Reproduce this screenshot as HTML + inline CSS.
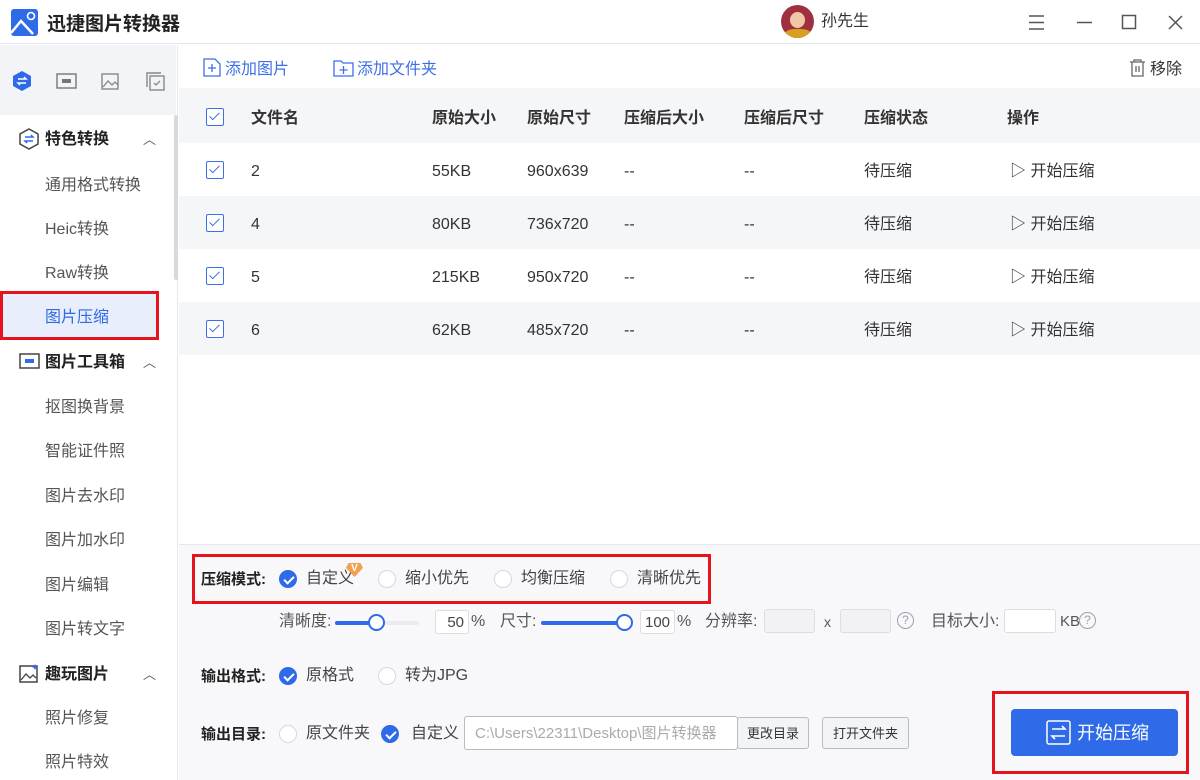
<!DOCTYPE html>
<html><head><meta charset="utf-8"><style>
*{margin:0;padding:0;box-sizing:border-box}
body{width:1200px;height:780px;overflow:hidden;background:#fff;font-family:"Liberation Sans","Noto Sans CJK SC",sans-serif;color:#333;position:relative;font-size:16px;line-height:24px}
.a{position:absolute;white-space:nowrap;line-height:24px}
.cb{position:absolute;width:18px;height:18px;border:1.5px solid #3d6fe8;border-radius:2px;background:#fff}
.cb:after{content:"";position:absolute;left:5px;top:1px;width:4px;height:9px;border:solid #3d6fe8;border-width:0 1.5px 1.5px 0;transform:rotate(45deg)}
.rad{position:absolute;width:18px;height:18px;border-radius:50%;border:1px solid #d6d8de;background:#fff}
.rad.on{background:#2f6ae8;border-color:#2f6ae8}
.rad.on:after{content:"";position:absolute;left:5.5px;top:2.5px;width:4px;height:8px;border:solid #fff;border-width:0 2px 2px 0;transform:rotate(45deg)}
.side{color:#555;font-size:16px}
.b{font-weight:bold;color:#222}
.inp{position:absolute;height:24px;border:1px solid #dcdde2;border-radius:3px;background:#fff;font-size:15px;color:#444;text-align:right;padding:0 4px;line-height:23px}
.btn{position:absolute;height:32px;border:1px solid #b8bac4;border-radius:3px;background:#f3f4f7;font-size:13px;color:#333;text-align:center;line-height:31px}
.help{position:absolute;width:17px;height:17px;border:1.3px solid #9aa0ae;border-radius:50%;font-size:12px;line-height:14px;text-align:center;color:#9aa0ae}
</style></head><body>
<div class="a" style="left:0;top:0;width:1200px;height:44px;border-bottom:1px solid #e3e6f2"></div>
<svg class="a" style="left:11px;top:9px" width="27" height="27" viewBox="0 0 27 27"><rect width="27" height="27" rx="3" fill="#2f6ae8"/><path d="M0 24 L10 12 L22 25" stroke="#fff" stroke-width="2.5" fill="none"/><circle cx="20" cy="7" r="3.5" stroke="#fff" stroke-width="1.6" fill="none"/></svg>
<div class="a b" style="left:47px;top:11px;font-size:19px;line-height:28px">迅捷图片转换器</div>
<div class="a" style="left:781px;top:5px;width:33px;height:33px;border-radius:50%;background:#a03040;overflow:hidden"><div style="position:absolute;left:9px;top:7px;width:15px;height:16px;border-radius:50%;background:#f0c8a8"></div><div style="position:absolute;left:4px;top:24px;width:26px;height:12px;background:#d8a020;border-radius:40%"></div></div>
<div class="a" style="left:821px;top:10px;font-size:16px;color:#333">孙先生</div>
<svg class="a" style="left:1027px;top:14px" width="20" height="17"><path d="M2 2h15M2 8.5h15M2 15h15" stroke="#555" stroke-width="1.5"/></svg>
<svg class="a" style="left:1075px;top:14px" width="20" height="17"><path d="M2 8.5h15" stroke="#555" stroke-width="1.5"/></svg>
<svg class="a" style="left:1121px;top:14px" width="17" height="17"><rect x="1.5" y="1.5" width="13" height="13" stroke="#555" stroke-width="1.5" fill="none"/></svg>
<svg class="a" style="left:1167px;top:14px" width="17" height="17"><path d="M2 2l13 13M15 2L2 15" stroke="#555" stroke-width="1.5"/></svg>
<div class="a" style="left:0;top:45px;width:178px;height:735px;background:#fff;border-right:1px solid #e8e9ee"></div>
<div class="a" style="left:0;top:45px;width:176px;height:70px;background:#f3f4f7"></div>
<div class="a" style="left:174px;top:115px;width:4px;height:165px;background:#d8d9de;border-radius:2px"></div>
<svg class="a" style="left:12px;top:70px" width="20" height="22"><path d="M10 1l9 5v10l-9 5l-9-5V6z" fill="#2f6ae8"/><path d="M6 9h8l-2-2M14 13H6l2 2" stroke="#fff" stroke-width="1.5" fill="none"/></svg>
<svg class="a" style="left:56px;top:72px" width="21" height="18"><rect x="1" y="2" width="19" height="14" stroke="#777" stroke-width="1.4" fill="none"/><rect x="6" y="7" width="9" height="4" fill="#777"/></svg>
<svg class="a" style="left:101px;top:71px" width="20" height="20"><rect x="1" y="3" width="16" height="15" stroke="#888" stroke-width="1.4" fill="none"/><path d="M2 16l5-6l4 4l3-3l3 3" stroke="#888" stroke-width="1.3" fill="none"/></svg>
<svg class="a" style="left:145px;top:71px" width="21" height="21"><rect x="5" y="5" width="14" height="14" stroke="#888" stroke-width="1.4" fill="none"/><path d="M2 16V2h14" stroke="#888" stroke-width="1.4" fill="none"/><path d="M9 12l2 2l4-4" stroke="#888" stroke-width="1.3" fill="none"/></svg>
<svg class="a" style="left:19px;top:128px" width="20" height="22"><path d="M10 1l9 5v10l-9 5l-9-5V6z" stroke="#444" stroke-width="1.5" fill="none"/><path d="M6 9h8l-2-2M14 13H6l2 2" stroke="#2f6ae8" stroke-width="1.5" fill="none"/></svg>
<div class="a b" style="left:45px;top:128px">特色转换</div>
<div class="a" style="left:143px;top:128px;font-size:13px;color:#555">︿</div>
<div class="a side" style="left:45px;top:174px">通用格式转换</div>
<div class="a side" style="left:45px;top:218px">Heic转换</div>
<div class="a side" style="left:45px;top:262px">Raw转换</div>
<div class="a" style="left:0;top:291px;width:159px;height:49px;background:#e8eefb;border:3px solid #e8121d"></div>
<div class="a" style="left:45px;top:306px;color:#2f6ae8">图片压缩</div>
<svg class="a" style="left:19px;top:352px" width="21" height="18"><rect x="1" y="2" width="19" height="14" stroke="#444" stroke-width="1.5" fill="none"/><rect x="6" y="7" width="9" height="4" fill="#2f6ae8"/></svg>
<div class="a b" style="left:45px;top:351px">图片工具箱</div>
<div class="a" style="left:143px;top:351px;font-size:13px;color:#555">︿</div>
<div class="a side" style="left:45px;top:396px">抠图换背景</div>
<div class="a side" style="left:45px;top:440px">智能证件照</div>
<div class="a side" style="left:45px;top:485px">图片去水印</div>
<div class="a side" style="left:45px;top:529px">图片加水印</div>
<div class="a side" style="left:45px;top:574px">图片编辑</div>
<div class="a side" style="left:45px;top:618px">图片转文字</div>
<svg class="a" style="left:19px;top:663px" width="21" height="21"><rect x="1" y="3" width="17" height="16" stroke="#444" stroke-width="1.5" fill="none"/><path d="M2 17l5-6l4 4l3-3l3 3" stroke="#444" stroke-width="1.3" fill="none"/><path d="M16 1l1 2l2 1l-2 1l-1 2l-1-2l-2-1l2-1z" fill="#2f6ae8"/></svg>
<div class="a b" style="left:45px;top:663px">趣玩图片</div>
<div class="a" style="left:143px;top:663px;font-size:13px;color:#555">︿</div>
<div class="a side" style="left:45px;top:707px">照片修复</div>
<div class="a side" style="left:45px;top:751px">照片特效</div>
<svg class="a" style="left:203px;top:58px" width="18" height="19"><path d="M1 1h11l5 5v12H1z" stroke="#3d6fe8" stroke-width="1.3" fill="none"/><path d="M9 6v8M5 10h8" stroke="#3d6fe8" stroke-width="1.3"/></svg>
<div class="a" style="left:225px;top:58px;color:#3d6fe8">添加图片</div>
<svg class="a" style="left:333px;top:59px" width="21" height="18"><path d="M1 2h7l2 2h10v13H1z" stroke="#3d6fe8" stroke-width="1.3" fill="none"/><path d="M10.5 7v8M6.5 11h8" stroke="#3d6fe8" stroke-width="1.3"/></svg>
<div class="a" style="left:357px;top:58px;color:#3d6fe8">添加文件夹</div>
<svg class="a" style="left:1129px;top:59px" width="17" height="18"><path d="M1 3h15M5 3V1h7v2M3 3v14h11V3M7 7v6M10 7v6" stroke="#666" stroke-width="1.3" fill="none"/></svg>
<div class="a" style="left:1150px;top:58px;color:#333">移除</div>
<div class="a" style="left:179px;top:88px;width:1021px;height:55px;background:#f5f6f8"></div>
<div class="a" style="left:179px;top:196px;width:1021px;height:53px;background:#f5f6f8"></div>
<div class="a" style="left:179px;top:302px;width:1021px;height:53px;background:#f5f6f8"></div>
<div class="cb" style="left:206px;top:108px"></div>
<div class="a b" style="left:251px;top:107px;color:#333">文件名</div>
<div class="a b" style="left:432px;top:107px;color:#333">原始大小</div>
<div class="a b" style="left:527px;top:107px;color:#333">原始尺寸</div>
<div class="a b" style="left:624px;top:107px;color:#333">压缩后大小</div>
<div class="a b" style="left:744px;top:107px;color:#333">压缩后尺寸</div>
<div class="a b" style="left:864px;top:107px;color:#333">压缩状态</div>
<div class="a b" style="left:1007px;top:107px;color:#333">操作</div>
<div class="cb" style="left:206px;top:161px"></div><div class="a" style="left:251px;top:160px">2</div><div class="a" style="left:432px;top:160px">55KB</div><div class="a" style="left:527px;top:160px">960x639</div><div class="a" style="left:624px;top:160px">--</div><div class="a" style="left:744px;top:160px">--</div><div class="a" style="left:864px;top:160px">待压缩</div><div class="a" style="left:1010px;top:160px">▷ 开始压缩</div>
<div class="cb" style="left:206px;top:214px"></div><div class="a" style="left:251px;top:213px">4</div><div class="a" style="left:432px;top:213px">80KB</div><div class="a" style="left:527px;top:213px">736x720</div><div class="a" style="left:624px;top:213px">--</div><div class="a" style="left:744px;top:213px">--</div><div class="a" style="left:864px;top:213px">待压缩</div><div class="a" style="left:1010px;top:213px">▷ 开始压缩</div>
<div class="cb" style="left:206px;top:267px"></div><div class="a" style="left:251px;top:266px">5</div><div class="a" style="left:432px;top:266px">215KB</div><div class="a" style="left:527px;top:266px">950x720</div><div class="a" style="left:624px;top:266px">--</div><div class="a" style="left:744px;top:266px">--</div><div class="a" style="left:864px;top:266px">待压缩</div><div class="a" style="left:1010px;top:266px">▷ 开始压缩</div>
<div class="cb" style="left:206px;top:320px"></div><div class="a" style="left:251px;top:319px">6</div><div class="a" style="left:432px;top:319px">62KB</div><div class="a" style="left:527px;top:319px">485x720</div><div class="a" style="left:624px;top:319px">--</div><div class="a" style="left:744px;top:319px">--</div><div class="a" style="left:864px;top:319px">待压缩</div><div class="a" style="left:1010px;top:319px">▷ 开始压缩</div>
<div class="a" style="left:179px;top:544px;width:1021px;height:236px;background:#f8f8fb;border-top:1px solid #e6e7ec"></div>
<div class="a" style="left:192px;top:554px;width:519px;height:50px;border:3px solid #e8121d"></div>
<div class="a b" style="left:201px;top:568px;font-size:15px">压缩模式:</div>
<div class="rad on" style="left:279px;top:570px"></div><div class="a" style="left:306px;top:567px;color:#444">自定义</div>
<div class="a" style="left:346px;top:563px;width:17px;height:14px;background:#f0a050;color:#fff;font-size:10px;font-weight:bold;text-align:center;line-height:12px;clip-path:polygon(15% 0,85% 0,100% 35%,50% 100%,0 35%)">V</div>
<div class="rad" style="left:378px;top:570px"></div><div class="a" style="left:405px;top:567px;color:#444">缩小优先</div>
<div class="rad" style="left:494px;top:570px"></div><div class="a" style="left:521px;top:567px;color:#444">均衡压缩</div>
<div class="rad" style="left:610px;top:570px"></div><div class="a" style="left:637px;top:567px;color:#444">清晰优先</div>
<div class="a" style="left:279px;top:610px;color:#555">清晰度:</div>
<div class="a" style="left:335px;top:621px;width:84px;height:4px;background:#ececf0;border-radius:2px"></div>
<div class="a" style="left:335px;top:621px;width:40px;height:4px;background:#2f6ae8;border-radius:2px"></div>
<div class="a" style="left:368px;top:614px;width:17px;height:17px;border-radius:50%;background:#fff;border:2px solid #2f6ae8"></div>
<div class="inp" style="left:435px;top:610px;width:34px">50</div><div class="a" style="left:471px;top:610px;color:#555">%</div>
<div class="a" style="left:500px;top:610px;color:#555">尺寸:</div>
<div class="a" style="left:541px;top:621px;width:84px;height:4px;background:#2f6ae8;border-radius:2px"></div>
<div class="a" style="left:616px;top:614px;width:17px;height:17px;border-radius:50%;background:#fff;border:2px solid #2f6ae8"></div>
<div class="inp" style="left:640px;top:610px;width:35px">100</div><div class="a" style="left:677px;top:610px;color:#555">%</div>
<div class="a" style="left:705px;top:610px;color:#555">分辨率:</div>
<div class="inp" style="left:764px;top:609px;width:51px;background:#f2f2f4"></div>
<div class="a" style="left:824px;top:610px;color:#555;font-size:14px">x</div>
<div class="inp" style="left:840px;top:609px;width:51px;background:#f2f2f4"></div>
<div class="help" style="left:897px;top:612px">?</div>
<div class="a" style="left:931px;top:610px;color:#555">目标大小:</div>
<div class="inp" style="left:1004px;top:609px;width:52px"></div>
<div class="a" style="left:1060px;top:610px;color:#555;font-size:15px">KB</div>
<div class="help" style="left:1079px;top:612px">?</div>
<div class="a b" style="left:201px;top:665px;font-size:15px">输出格式:</div>
<div class="rad on" style="left:279px;top:667px"></div><div class="a" style="left:306px;top:664px;color:#444">原格式</div>
<div class="rad" style="left:378px;top:667px"></div><div class="a" style="left:405px;top:664px;color:#444">转为JPG</div>
<div class="a b" style="left:201px;top:723px;font-size:15px">输出目录:</div>
<div class="rad" style="left:279px;top:725px"></div><div class="a" style="left:306px;top:722px;color:#444">原文件夹</div>
<div class="rad on" style="left:381px;top:725px"></div><div class="a" style="left:411px;top:722px;color:#444">自定义</div>
<div class="a" style="left:464px;top:716px;width:274px;height:34px;border:1px solid #b8bac4;border-radius:3px;background:#fff;color:#aaa;font-size:15px;padding:0 10px;line-height:33px;overflow:hidden">C:\Users\22311\Desktop\图片转换器</div>
<div class="btn" style="left:737px;top:717px;width:72px">更改目录</div>
<div class="btn" style="left:822px;top:717px;width:87px">打开文件夹</div>
<div class="a" style="left:992px;top:691px;width:197px;height:83px;border:3px solid #e8121d"></div>
<div class="a" style="left:1011px;top:709px;width:167px;height:47px;background:#2f6ae8;border-radius:4px"></div>
<svg class="a" style="left:1046px;top:720px" width="25" height="25"><rect x="1" y="1" width="23" height="23" rx="2" stroke="#fff" stroke-width="1.5" fill="none"/><path d="M6 9h13l-3-3M19 16H6l3 3" stroke="#fff" stroke-width="1.6" fill="none"/></svg>
<div class="a" style="left:1077px;top:721px;color:#fff;font-size:18px">开始压缩</div>
</body></html>
